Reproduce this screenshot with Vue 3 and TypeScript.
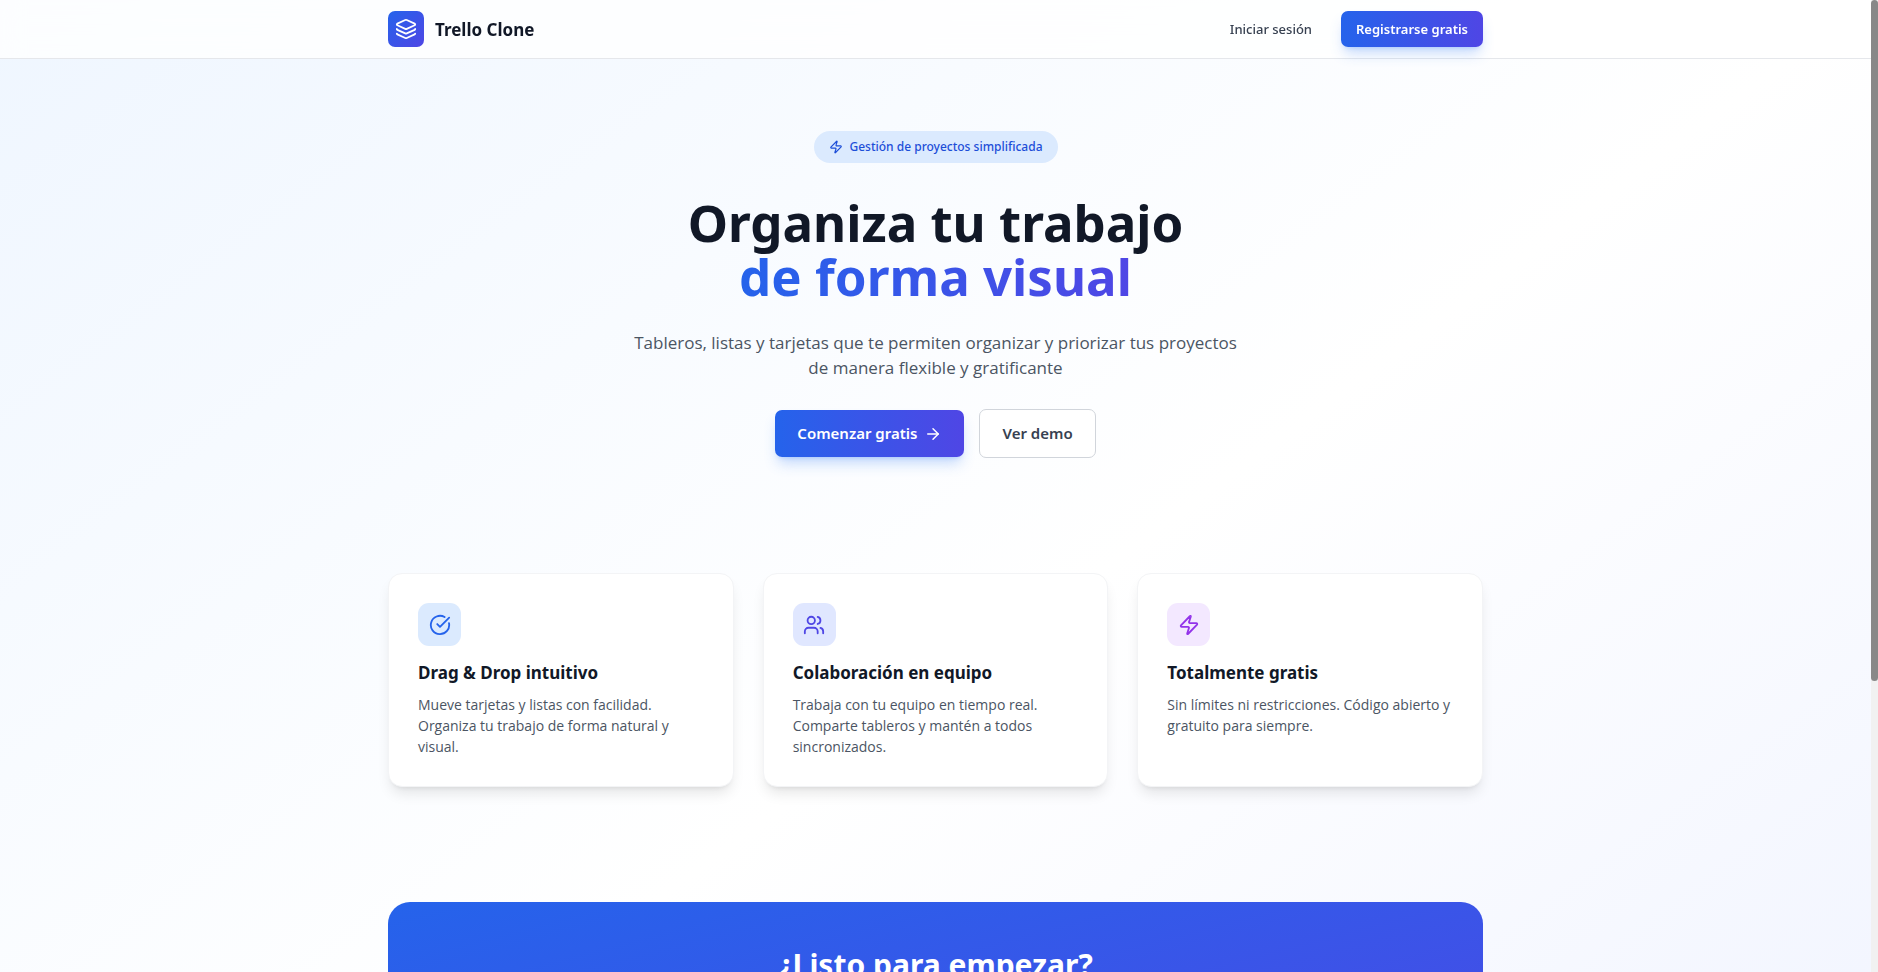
<script setup lang="ts">
import { computed, onBeforeUnmount, onMounted, ref } from 'vue'

interface Feature {
  title: string
  text: string
  tone: 'blue' | 'indigo' | 'purple'
  paths: string[]
}

const boltPath =
  'M4 14a1 1 0 0 1-.78-1.63l9.9-10.2a.5.5 0 0 1 .86.46l-1.92 6.02A1 1 0 0 0 13 10h7a1 1 0 0 1 .78 1.63l-9.9 10.2a.5.5 0 0 1-.86-.46l1.92-6.02A1 1 0 0 0 11 14z'

const features: Feature[] = [
  {
    title: 'Drag & Drop intuitivo',
    text: 'Mueve tarjetas y listas con facilidad. Organiza tu trabajo de forma natural y visual.',
    tone: 'blue',
    paths: ['M21.801 10A10 10 0 1 1 17 3.335', 'm9 11 3 3L22 4'],
  },
  {
    title: 'Colaboración en equipo',
    text: 'Trabaja con tu equipo en tiempo real. Comparte tableros y mantén a todos sincronizados.',
    tone: 'indigo',
    paths: [
      'M16 21v-2a4 4 0 0 0-4-4H6a4 4 0 0 0-4 4v2',
      'M9 3a4 4 0 1 0 0 8a4 4 0 1 0 0-8',
      'M22 21v-2a4 4 0 0 0-3-3.87',
      'M16 3.13a4 4 0 0 1 0 7.75',
    ],
  },
  {
    title: 'Totalmente gratis',
    text: 'Sin límites ni restricciones. Código abierto y gratuito para siempre.',
    tone: 'purple',
    paths: [boltPath],
  },
]

const viewport = ref<HTMLElement | null>(null)
const visibleRatio = ref(1)
const scrollRatio = ref(0)

const thumbStyle = computed(() => ({
  height: `${visibleRatio.value * 100}%`,
  marginTop: `${scrollRatio.value * 100}vh`,
}))

function measure() {
  const el = viewport.value
  if (!el) return
  visibleRatio.value = el.clientHeight / el.scrollHeight
  scrollRatio.value = el.scrollTop / el.scrollHeight
}

onMounted(() => {
  measure()
  window.addEventListener('resize', measure)
})
onBeforeUnmount(() => window.removeEventListener('resize', measure))
</script>

<template>
  <div class="shell">
    <div ref="viewport" class="viewport" @scroll="measure">
      <div class="page">
        <header class="topbar">
          <div class="container topbar-row">
            <a class="brand" href="#">
              <span class="brand-mark">
                <svg class="icon" viewBox="0 0 24 24" aria-hidden="true">
                  <path d="M12.83 2.18a2 2 0 0 0-1.66 0L2.6 6.08a1 1 0 0 0 0 1.83l8.58 3.91a2 2 0 0 0 1.66 0l8.58-3.9a1 1 0 0 0 0-1.83z" />
                  <path d="M2 12a1 1 0 0 0 .58.91l8.6 3.91a2 2 0 0 0 1.65 0l8.58-3.9A1 1 0 0 0 22 12" />
                  <path d="M2 17a1 1 0 0 0 .58.91l8.6 3.91a2 2 0 0 0 1.65 0l8.58-3.9A1 1 0 0 0 22 17" />
                </svg>
              </span>
              <span>Trello Clone</span>
            </a>
            <nav class="nav">
              <a class="login" href="#">Iniciar sesión</a>
              <a class="signup" href="#">Registrarse gratis</a>
            </nav>
          </div>
        </header>

        <main class="container">
          <section class="hero">
            <div class="badge">
              <svg class="icon" viewBox="0 0 24 24" aria-hidden="true"><path :d="boltPath" /></svg>
              <span>Gestión de proyectos simplificada</span>
            </div>
            <h1>Organiza tu trabajo<br /><span class="accent">de forma visual</span></h1>
            <p class="lead">
              Tableros, listas y tarjetas que te permiten organizar y priorizar tus proyectos de
              manera flexible y gratificante
            </p>
            <div class="actions">
              <a class="primary" href="#">
                Comenzar gratis
                <svg class="icon" viewBox="0 0 24 24" aria-hidden="true">
                  <path d="M5 12h14" />
                  <path d="m12 5 7 7-7 7" />
                </svg>
              </a>
              <button class="secondary" type="button">Ver demo</button>
            </div>
          </section>

          <section class="features">
            <article v-for="f in features" :key="f.title" class="card">
              <div class="card-icon" :class="f.tone">
                <svg class="icon" viewBox="0 0 24 24" aria-hidden="true">
                  <path v-for="p in f.paths" :key="p" :d="p" />
                </svg>
              </div>
              <h3>{{ f.title }}</h3>
              <p>{{ f.text }}</p>
            </article>
          </section>

          <section class="cta">
            <h2>¿Listo para empezar?</h2>
          </section>
        </main>
      </div>
    </div>
    <div class="scroll-track" aria-hidden="true">
      <div class="scroll-thumb" :style="thumbStyle"></div>
    </div>
  </div>
</template>

<style>
html,
body {
  margin: 0;
}
</style>

<style scoped>
.shell {
  display: flex;
  height: 100vh;
  overflow: hidden;
  font-family: 'Noto Sans', 'Open Sans', sans-serif;
  color: #111827;
}

.viewport {
  flex: 1;
  min-width: 0;
  overflow-y: auto;
  scrollbar-width: none;
}

.scroll-track {
  flex: none;
  width: 7px;
  background: #f1f1f1;
}

.scroll-thumb {
  border-radius: 4px;
  background: #888;
}

.page {
  padding-bottom: 200px;
  background: linear-gradient(to bottom right, #eff6ff, #fff, #eef2ff);
}

.container {
  box-sizing: border-box;
  width: 100%;
  max-width: 1153px;
  margin: 0 auto;
  padding: 0 29px;
}

.icon {
  display: block;
  flex: none;
  fill: none;
  stroke: currentColor;
  stroke-width: 2;
  stroke-linecap: round;
  stroke-linejoin: round;
}

a {
  color: inherit;
  text-decoration: none;
}

.topbar {
  position: sticky;
  top: 0;
  z-index: 10;
  border-bottom: 1px solid #e5e7eb;
  background: rgba(255, 255, 255, 0.8);
  backdrop-filter: blur(12px);
}

.topbar-row {
  display: flex;
  align-items: center;
  justify-content: space-between;
  height: 58px;
}

.brand {
  display: flex;
  align-items: center;
  gap: 11px;
  font-size: 17px;
  font-weight: 700;
}

.brand-mark {
  display: grid;
  place-items: center;
  width: 36px;
  height: 36px;
  border-radius: 7px;
  color: #fff;
  background: linear-gradient(to bottom right, #2563eb, #4f46e5);
}

.brand-mark .icon {
  width: 22px;
  height: 22px;
}

.nav {
  display: flex;
  align-items: center;
  gap: 29px;
  font-size: 13px;
}

.login {
  font-weight: 500;
  color: #374151;
}

.signup {
  padding: 0 15px;
  border-radius: 7px;
  line-height: 36px;
  font-weight: 600;
  color: #fff;
  background: linear-gradient(to right, #2563eb, #4f46e5);
  box-shadow: 0 9px 14px -3px rgba(59, 130, 246, 0.3), 0 4px 5px -4px rgba(59, 130, 246, 0.3);
}

.hero {
  display: flex;
  flex-direction: column;
  align-items: center;
  padding: 72px 0 115px;
  text-align: center;
}

.badge {
  display: flex;
  align-items: center;
  gap: 7px;
  padding: 0 15px;
  border-radius: 16px;
  font-size: 12px;
  font-weight: 500;
  line-height: 32px;
  color: #1d4ed8;
  background: #dbeafe;
}

.badge .icon {
  width: 14px;
  height: 14px;
}

h1 {
  margin: 32px 0 27px;
  font-size: 51px;
  font-weight: 700;
  line-height: 54px;
}

.accent {
  color: transparent;
  background: linear-gradient(to right, #2563eb, #4f46e5);
  background-clip: text;
}

.lead {
  max-width: 604px;
  margin: 0;
  font-family: 'Open Sans', sans-serif;
  font-size: 17px;
  line-height: 25px;
  color: #4b5563;
}

.actions {
  display: flex;
  align-items: center;
  gap: 15px;
  margin-top: 29px;
  font-size: 15px;
  font-weight: 600;
}

.primary,
.secondary {
  padding: 0 22px;
  border-radius: 7px;
  line-height: 47px;
}

.primary {
  display: flex;
  align-items: center;
  gap: 7px;
  color: #fff;
  background: linear-gradient(to right, #2563eb, #4f46e5);
  box-shadow: 0 9px 14px -3px rgba(59, 130, 246, 0.3), 0 4px 5px -4px rgba(59, 130, 246, 0.3);
}

.primary .icon {
  width: 18px;
  height: 18px;
}

.secondary {
  border: 1px solid #d1d5db;
  font: inherit;
  line-height: 47px;
  color: #374151;
  background: #fff;
}

.features {
  display: grid;
  grid-template-columns: repeat(3, 1fr);
  gap: 29px;
}

.card {
  padding: 29px;
  border: 1px solid #f3f4f6;
  border-radius: 14px;
  background: #fff;
  box-shadow: 0 9px 14px -3px rgba(0, 0, 0, 0.1), 0 4px 5px -4px rgba(0, 0, 0, 0.1);
}

.card-icon {
  display: grid;
  place-items: center;
  width: 43px;
  height: 43px;
  border-radius: 11px;
}

.card-icon .icon {
  width: 22px;
  height: 22px;
}

.blue {
  color: #2563eb;
  background: #dbeafe;
}

.indigo {
  color: #4f46e5;
  background: #e0e7ff;
}

.purple {
  color: #9333ea;
  background: #f3e8ff;
}

.card h3 {
  margin: 14px 0 9px;
  font-size: 17px;
  font-weight: 700;
  line-height: 25px;
}

.card p {
  margin: 0;
  font-family: 'Open Sans', sans-serif;
  font-size: 14px;
  line-height: 21px;
  color: #4b5563;
}

.cta {
  box-sizing: border-box;
  min-height: 286px;
  margin-top: 115px;
  padding: 43px;
  border-radius: 22px;
  text-align: center;
  color: #fff;
  background: linear-gradient(to bottom right, #2563eb, #4f46e5);
}

h2 {
  margin: 0;
  font-size: 30px;
  font-weight: 700;
  line-height: 40px;
}
</style>
